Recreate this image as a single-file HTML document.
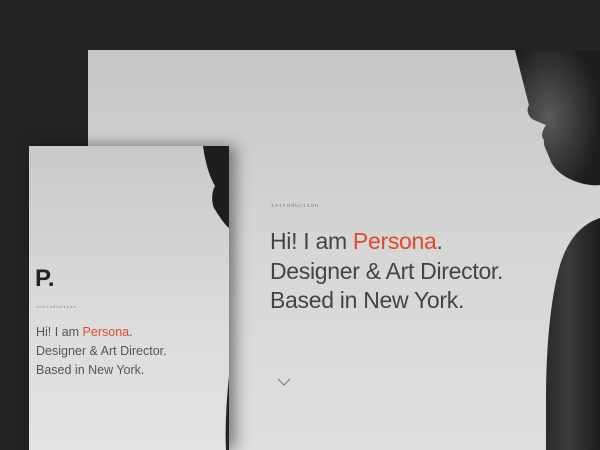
<!DOCTYPE html>
<html><head><style>
body{margin:0;width:600px;height:450px;background:#232323;position:relative;overflow:hidden;font-family:"Liberation Sans",sans-serif}
.big{position:absolute;left:88px;top:50px;width:512px;height:400px;background:linear-gradient(180deg,#c6c6c6 0%,#d6d6d6 50%,#dedede 100%);overflow:hidden}
.small{position:absolute;left:29px;top:146px;width:200px;height:304px;background:linear-gradient(180deg,#c9c9c9,#dcdcdc 60%,#e2e2e2);overflow:hidden;box-shadow:6px 0 14px rgba(0,0,0,.45)}
.intro{font-family:"Liberation Mono",monospace;color:#777;letter-spacing:1px}
.t{color:#444}
.o{color:#e0492a}
</style></head><body>
<div class="big">
<svg width="512" height="400" style="position:absolute;left:0;top:0">
<defs><radialGradient id="f" cx=".4" cy=".5" r=".6"><stop offset="0" stop-color="#5a5a5a"/><stop offset="1" stop-color="#1e1e1e"/></radialGradient>
<linearGradient id="b" x1="0" x2="1"><stop offset="0" stop-color="#2a2a2a"/><stop offset=".4" stop-color="#3c3c3c"/><stop offset="1" stop-color="#1c1c1c"/></linearGradient></defs>
<path d="M427 0 L512 0 L512 135 C500 137 472 130 463 112 C460 102 455 97 456 90 C452 85 455 80 458 75 L446 70 C440 67 438 60 441 55 C437 40 432 20 427 0 Z" fill="url(#f)"/>
<path d="M512 168 C490 175 478 195 472 215 C462 250 458 300 458 350 L458 400 L512 400 Z" fill="url(#b)"/>
</svg>
<div class="intro" style="position:absolute;left:183px;top:153px;font-size:5px">introduction</div>
<div class="t" style="position:absolute;left:182px;top:177px;font-size:23px;line-height:29.5px;letter-spacing:-.3px">Hi! I am <span class="o">Persona</span>.<br>Designer &amp; Art Director.<br>Based in New York.</div>
<svg style="position:absolute;left:189px;top:327px" width="14" height="10"><path d="M1 2 L7 8 L13 2" stroke="#777" fill="none" stroke-width="1"/></svg>
</div>
<div class="small">
<svg width="200" height="304" style="position:absolute;left:0;top:0"><path d="M174 0 L200 0 L200 82 C195 78 190 70 185 62 C182 55 183 45 186 40 C180 30 176 15 174 0Z" fill="#1e1e1e"/><path d="M200 230 C197 260 196 285 197 304 L200 304Z" fill="#222"/></svg>
<div style="position:absolute;left:6px;top:119px;font-size:24px;font-weight:bold;color:#222">P.</div>
<div class="intro" style="position:absolute;left:7px;top:160px;font-size:4px">introduction</div>
<div class="t" style="position:absolute;left:7px;top:177px;font-size:12.5px;line-height:19px;color:#555;letter-spacing:0">Hi! I am <span class="o">Persona</span>.<br>Designer &amp; Art Director.<br>Based in New York.</div>
</div>
</body></html>
